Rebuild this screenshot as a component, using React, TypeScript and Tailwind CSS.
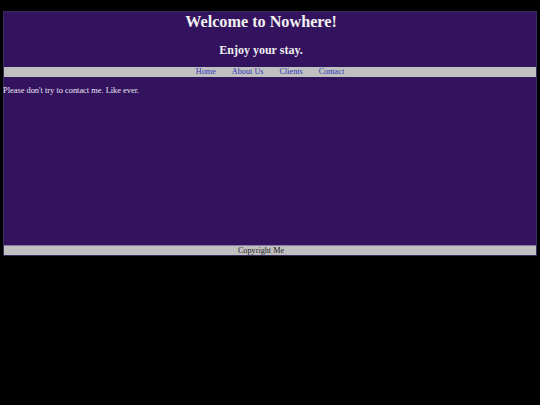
export default function App() {
  return (
    <div className="min-h-[405px] w-[540px] bg-black pt-[11px] px-[3px]" style={{ fontFamily: '"Liberation Serif", "Times New Roman", serif' }}>
      <div className="bg-[#33125e] border border-[#3a2a5a] h-[245px] flex flex-col">
        <div className="text-center text-[#f0f0f0] pr-[18px]">
          <h1 className="text-[16.2px] font-bold leading-[18px] pt-[1px]">Welcome to Nowhere!</h1>
          <h2 className="text-[12px] font-bold leading-[14px] mt-[12px] mb-[10px]">Enjoy your stay.</h2>
        </div>
        <nav className="bg-[#c0c0c0] h-[10px] flex justify-center items-center text-[8.2px] leading-[10px] text-[#3434b8]">
          <a className="mx-[8px]">Home</a>
          <a className="mx-[8px]">About Us</a>
          <a className="mx-[8px]">Clients</a>
          <a className="mx-[8px]">Contact</a>
        </nav>
        <p className="text-[8.4px] leading-[10px] text-[#ece6f4] mt-[9px] flex-1 -ml-[1px]">Please don't try to contact me. Like ever.</p>
        <footer className="bg-[#c0c0c0] border-t border-[#8a7aa8] h-[10px] text-center text-[8.2px] leading-[10px] text-[#222] pr-[18px]">Copyright Me</footer>
      </div>
    </div>
  );
}
